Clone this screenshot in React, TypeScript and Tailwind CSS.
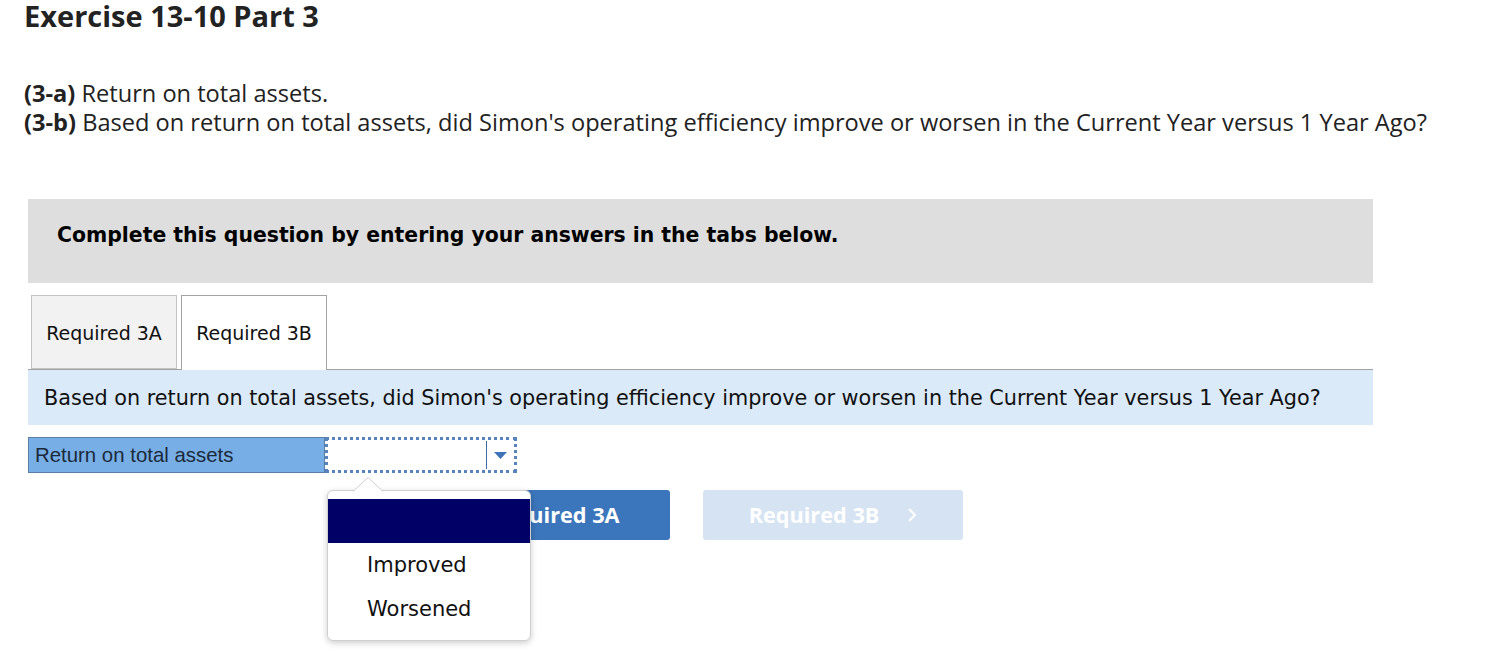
import { FC, ReactNode } from 'react'

const proxima = { fontFamily: '"Open Sans", Lato, sans-serif' }
const verdana = { fontFamily: '"DejaVu Sans", Verdana, sans-serif' }
const arial = { fontFamily: '"Liberation Sans", Arial, sans-serif' }

interface ITab {
  active?: boolean
  children: ReactNode
}

const Tab: FC<ITab> = ({ active = false, children }) => {
  return (
    <div
      style={verdana}
      className={
        active
          ? 'flex h-[75px] w-[146px] items-center justify-center -mb-px border border-b-0 border-[#a3a3a3] bg-white text-[19px] text-[#111]'
          : 'flex h-[74px] w-[146px] items-center justify-center border border-[#c4c4c4] bg-[#f2f2f2] pt-[3px] text-[19px] text-[#111]'
      }
    >
      {children}
    </div>
  )
}

const Chevron: FC<{ dir: 'left' | 'right' }> = ({ dir }) => (
  <svg width="10" height="16" viewBox="0 0 10 16" fill="none">
    <path
      d={dir === 'left' ? 'M8 2 L2 8 L8 14' : 'M2 2 L8 8 L2 14'}
      stroke="currentColor"
      strokeWidth="2"
    />
  </svg>
)

const App = () => {
  return (
    <div className="min-h-screen bg-white pl-6 text-[#222]">
      <h1 style={proxima} className="text-[29px] font-bold leading-[32px] text-[#222]">
        Exercise 13-10 Part 3
      </h1>

      <div style={proxima} className="mt-[47px] text-[23.6px] leading-[29px] text-[#222]">
        <p>
          <b>(3-a)</b> Return on total assets.
        </p>
        <p>
          <b>(3-b)</b> Based on return on total assets, did Simon's operating efficiency improve or
          worsen in the Current Year versus 1 Year Ago?
        </p>
      </div>

      <div className="ml-1 w-[1345px]">
        <div className="mt-[62px] flex h-[84px] items-center bg-[#dedede] px-[29px]">
          <span style={verdana} className="-mt-3 text-[20.4px] font-bold text-black">
            Complete this question by entering your answers in the tabs below.
          </span>
        </div>

        <div className="mt-3 flex gap-[4px] border-b border-[#a3a3a3] pl-[3px]">
          <Tab>Required 3A</Tab>
          <Tab active>Required 3B</Tab>
        </div>

        <div className="flex h-[55px] items-center bg-[#dbeaf8] px-4 pt-[3px]">
          <span style={verdana} className="text-[20.75px] text-[#111]">
            Based on return on total assets, did Simon's operating efficiency improve or worsen in
            the Current Year versus 1 Year Ago?
          </span>
        </div>

        <div className="relative mt-3 flex h-[36px]">
          <div
            style={arial}
            className="flex w-[297px] items-center border border-[#5b7ea6] bg-[#78aee6] pl-[6px] text-[20.4px] text-[#1b2a3a]"
          >
            Return on total assets
          </div>
          <div className="flex w-[192px] items-stretch border-[3px] border-dotted border-[#5883bb] bg-white">
            <div className="flex-1" />
            <div className="my-[1px] w-px bg-[#3c6aa8]" />
            <div className="flex w-[27px] items-center justify-center">
              <svg width="13" height="7" viewBox="0 0 13 7">
                <path d="M0 0 H13 L6.5 7 Z" fill="#3f74b8" />
              </svg>
            </div>
          </div>

          <div className="absolute left-[299px] top-[53px] z-10 h-[151px] w-[204px] rounded-[6px] border border-[#cfcfcf] bg-white pt-[8px] shadow-[0_2px_6px_rgba(0,0,0,0.2)]">
            <svg
              className="absolute left-[25px] top-[-14px]"
              width="30"
              height="15"
              viewBox="0 0 30 15"
            >
              <path d="M0 14.5 L15 0.5 L30 14.5" fill="white" stroke="#cfcfcf" />
            </svg>
            <div className="h-[44px] bg-[#000066]" />
            <div style={verdana} className="text-[21px] text-[#111]">
              <div className="flex h-[44px] items-center pl-[39px] pt-[2px]">Improved</div>
              <div className="flex h-[44px] items-center pl-[39px] pt-[2px]">Worsened</div>
            </div>
          </div>
        </div>

        <div style={proxima} className="mt-[17px] flex gap-[33px] pl-[382px]">
          <button className="flex h-[50px] w-[260px] items-center justify-center gap-[18px] rounded-[3px] bg-[#3b75bb] text-[21.7px] font-bold text-white">
            <Chevron dir="left" />
            <span>Required 3A</span>
          </button>
          <button className="flex h-[50px] w-[260px] items-center justify-center gap-[28px] rounded-[3px] bg-[#d6e3f2] text-[21.7px] font-bold text-white">
            <span>Required 3B</span>
            <Chevron dir="right" />
          </button>
        </div>
      </div>
    </div>
  )
}

export default App
